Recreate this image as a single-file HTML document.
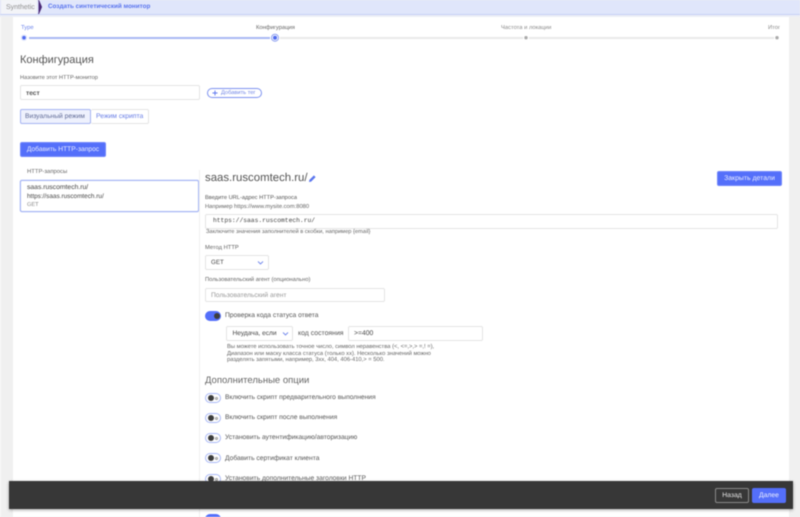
<!DOCTYPE html>
<html lang="ru"><head><meta charset="utf-8"><title>Создать синтетический монитор</title>
<style>
html,body{margin:0;padding:0;width:800px;height:517px;overflow:hidden;background:#f0f0f0}
body{position:relative;font-family:"Liberation Sans","Noto Sans CJK SC",sans-serif;color:#444;text-rendering:geometricPrecision}
#p{position:absolute;left:0;top:0;width:800px;height:517px;overflow:hidden;filter:blur(.4px)}
.a{position:absolute;white-space:nowrap}
.t{position:absolute;white-space:nowrap;line-height:1;transform:translateY(.8px)}
.box{position:absolute;box-sizing:border-box;background:#fff;border:1px solid #e4e4e4;border-radius:2px}
.btn{position:absolute;box-sizing:border-box;background:#546ffa;border:1px solid #6f85fb;border-radius:2px;color:#e8ecff;text-align:center}
.off{position:absolute;left:205px;width:16px;height:10px;box-sizing:border-box;border:1px solid #a9b8f6;border-radius:6px;background:#fff}
.off:before{content:"";position:absolute;left:1.5px;top:1px;width:6px;height:6px;border-radius:50%;background:#3d3d3d}
.off:after{content:"";position:absolute;right:2px;top:2.5px;width:3px;height:3px;box-sizing:border-box;border:.7px solid #999;border-radius:50%}
.lab{left:225px;font-size:6.7px;color:#555}
</style></head><body><div id="p">
<!-- header -->
<div class="a" style="left:0;top:0;width:800px;height:14px;background:#e0e6fb;border-bottom:1px solid #c6d1f6"></div>
<div class="a" style="left:0;top:15px;width:800px;height:2px;background:#eceef6"></div>
<div class="a" style="left:1px;top:0;width:36px;height:14px;background:#f3f4f8"></div>
<div class="a" style="left:0;top:17px;width:1px;height:500px;background:#fafafa"></div>
<div class="t" style="left:6px;top:3px;font-size:7px;color:#8f8f8f">Synthetic</div>
<svg class="a" style="left:37px;top:0" width="6" height="14"><path d="M1.5 0 L4.5 7 L1.5 14" fill="#4b2a78" stroke="#4b2a78" stroke-width="1"/></svg>
<div class="t" style="left:48px;top:3px;font-size:6.3px;font-weight:700;color:#5a75ee">Создать синтетический монитор</div>
<!-- white panel -->
<div class="a" style="left:13px;top:17px;width:776px;height:500px;background:#fff"></div>
<!-- stepper -->
<div class="t" style="left:21px;top:25px;font-size:5.8px;color:#6f86ec">Type</div>
<div class="t" style="left:256px;top:25px;font-size:5.8px;color:#666">Конфигурация</div>
<div class="t" style="left:501px;top:25px;font-size:5.8px;color:#8a8a8a">Частота и локации</div>
<div class="t" style="left:768px;top:25px;font-size:5.8px;color:#8a8a8a">Итог</div>
<div class="a" style="left:29px;top:37px;width:241px;height:1.5px;background:#a9b8f3"></div>
<div class="a" style="left:280px;top:37px;width:243px;height:1.5px;background:#e9e9e9"></div>
<div class="a" style="left:529px;top:37px;width:245px;height:1.5px;background:#e9e9e9"></div>
<svg class="a" style="left:20px;top:33px" width="8" height="10"><circle cx="4" cy="4.7" r="3.2" fill="#dfe5fc"/><circle cx="4" cy="4.7" r="1.8" fill="#4f6bf0"/></svg>
<svg class="a" style="left:270px;top:33px" width="10" height="10"><circle cx="5" cy="4.7" r="3.5" fill="#fff" stroke="#8b9ef0"/><circle cx="5" cy="4.7" r="2" fill="#4f6bf0"/></svg>
<svg class="a" style="left:523px;top:35px" width="6" height="6"><circle cx="3" cy="2.7" r="1.7" fill="#aaa"/></svg>
<svg class="a" style="left:774px;top:35px" width="6" height="6"><circle cx="3" cy="2.7" r="1.7" fill="#aaa"/></svg>
<!-- config -->
<div class="t" style="left:20px;top:53.5px;font-size:11px;color:#555">Конфигурация</div>
<div class="t" style="left:20px;top:75px;font-size:5.7px;color:#666">Назовите этот HTTP-монитор</div>
<div class="box" style="left:20px;top:85px;width:180px;height:15px"></div>
<div class="t" style="left:26px;top:89.5px;font-size:6.6px;font-weight:700;color:#555">тест</div>
<div class="a" style="left:207px;top:88px;width:55px;height:10px;box-sizing:border-box;border:1px solid #7d92f0;border-radius:6px;background:#fff"></div>
<svg class="a" style="left:212px;top:90px" width="6" height="6"><path d="M3 .5V5.5M.5 3H5.5" stroke="#5a75ee" stroke-width=".9"/></svg>
<div class="t" style="left:221px;top:90px;font-size:5.7px;color:#7186e6">Добавить тег</div>
<div class="box" style="left:20px;top:109px;width:71px;height:15px;background:#eef1fd;border-color:#a5b4f2"></div>
<div class="box" style="left:91px;top:109px;width:58px;height:15px;border-left:none"></div>
<div class="t" style="left:25px;top:113px;font-size:6.7px;color:#5f6a96">Визуальный режим</div>
<div class="t" style="left:96px;top:113px;font-size:6.8px;color:#6b80e6">Режим скрипта</div>
<div class="btn" style="left:20px;top:142px;width:86px;height:15px;line-height:14px;font-size:6.7px">Добавить HTTP-запрос</div>
<!-- left list -->
<div class="t" style="left:27px;top:169px;font-size:5.9px;color:#666">HTTP-запросы</div>
<div class="a" style="left:20px;top:180px;width:179px;height:32px;box-sizing:border-box;border:1px solid #a5b5f4;border-radius:2px;box-shadow:0 0 0 .5px #d5dcfa;background:#fff"></div>
<div class="t" style="left:27px;top:184px;font-size:6.8px;color:#444">saas.ruscomtech.ru/</div>
<div class="t" style="left:27px;top:192.5px;font-size:6.4px;color:#444">https://saas.ruscomtech.ru/</div>
<div class="t" style="left:27px;top:201.5px;font-size:5.6px;color:#888">GET</div>
<div class="a" style="left:199px;top:170px;width:1px;height:347px;background:#f0f0f0"></div>
<!-- right -->
<div class="t" style="left:205px;top:171.5px;font-size:11.4px;color:#555">saas.ruscomtech.ru/</div>
<svg class="a" style="left:308px;top:174px" width="9" height="9" viewBox="0 0 9 9"><path d="M1 8 L1.4 5.9 L5.9 1.4 L7.6 3.1 L3.1 7.6 Z" fill="#5a75ee"/></svg>
<div class="btn" style="left:717px;top:171px;width:65px;height:15px;line-height:14px;font-size:6.9px">Закрыть детали</div>
<div class="t" style="left:205px;top:194.5px;font-size:5.7px;color:#555">Введите URL-адрес HTTP-запроса</div>
<div class="t" style="left:205px;top:204px;font-size:5.8px;color:#666">Например https://www.mysite.com:8080</div>
<div class="box" style="left:205px;top:214px;width:573px;height:15px"></div>
<div class="t" style="left:213px;top:217px;font-size:6.3px;color:#444;font-family:'Liberation Mono',monospace">https://saas.ruscomtech.ru/</div>
<div class="t" style="left:206px;top:229px;font-size:5.7px;color:#666">Заключите значения заполнителей в скобки, например {email}</div>
<div class="t" style="left:205px;top:244.5px;font-size:5.8px;color:#666">Метод HTTP</div>
<div class="box" style="left:205px;top:255px;width:64px;height:15px"></div>
<div class="t" style="left:211px;top:259px;font-size:6.2px;color:#444">GET</div>
<svg class="a" style="left:257px;top:260px" width="7" height="6"><path d="M1 1.5 L3.5 4 L6 1.5" fill="none" stroke="#6f86ec" stroke-width=".9"/></svg>
<div class="t" style="left:205px;top:277px;font-size:5.75px;color:#666">Пользовательский агент (опционально)</div>
<div class="box" style="left:205px;top:288px;width:180px;height:14px"></div>
<div class="t" style="left:211px;top:291.5px;font-size:6.7px;color:#999">Пользовательский агент</div>
<div class="a" style="left:205px;top:310.5px;width:16px;height:10px;background:#546ffa;border-radius:5px"></div>
<div class="a" style="left:214px;top:312.5px;width:6px;height:6px;background:#3d3d3d;border-radius:50%"></div>
<div class="t lab" style="top:311.5px">Проверка кода статуса ответа</div>
<div class="box" style="left:226px;top:326px;width:67px;height:15px"></div>
<div class="t" style="left:232.5px;top:330px;font-size:6.6px;color:#444">Неудача, если</div>
<svg class="a" style="left:282px;top:331px" width="7" height="6"><path d="M1 1.5 L3.5 4 L6 1.5" fill="none" stroke="#6f86ec" stroke-width=".9"/></svg>
<div class="t" style="left:298px;top:330px;font-size:6.9px;color:#555">код состояния</div>
<div class="box" style="left:348px;top:326px;width:135px;height:15px"></div>
<div class="t" style="left:354px;top:330px;font-size:6.8px;color:#444">&gt;=400</div>
<div class="t" style="left:227px;top:344px;font-size:5.8px;color:#666">Вы можете использовать точное число, символ неравенства (&lt;, &lt;=,&gt;,&gt; =,! =),</div>
<div class="t" style="left:227px;top:350.5px;font-size:5.8px;color:#666">Диапазон или маску класса статуса (только xx). Несколько значений можно</div>
<div class="t" style="left:227px;top:357px;font-size:5.8px;color:#666">разделять запятыми, например, 3xx, 404, 406-410,&gt; = 500.</div>
<div class="t" style="left:205px;top:374.5px;font-size:9.5px;color:#666">Дополнительные опции</div>
<div class="off" style="top:393px"></div><div class="t lab" style="top:394px">Включить скрипт предварительного выполнения</div>
<div class="off" style="top:413px"></div><div class="t lab" style="top:414px">Включить скрипт после выполнения</div>
<div class="off" style="top:433px"></div><div class="t lab" style="top:434px">Установить аутентификацию/авторизацию</div>
<div class="off" style="top:453px"></div><div class="t lab" style="top:454.5px">Добавить сертификат клиента</div>
<div class="off" style="top:474px"></div><div class="t lab" style="top:474.5px">Установить дополнительные заголовки HTTP</div>
<div class="a" style="left:205px;top:514px;width:16px;height:10px;background:#546ffa;border-radius:5px"></div>
<!-- footer bar -->
<div class="a" style="left:9px;top:481px;width:784px;height:28px;background:#373737;box-shadow:0 1px 3px rgba(0,0,0,.35)"></div>
<div class="a" style="left:715px;top:488px;width:34px;height:15px;box-sizing:border-box;border:1px solid #8a8a8a;border-radius:2px;color:#e2e2e2;font-size:6.8px;text-align:center;line-height:13px">Назад</div>
<div class="a" style="left:752px;top:488px;width:34px;height:15px;box-sizing:border-box;background:#546ffa;border-radius:2px;color:#eef0ff;font-size:6.8px;text-align:center;line-height:15px">Далее</div>
</div></body></html>
